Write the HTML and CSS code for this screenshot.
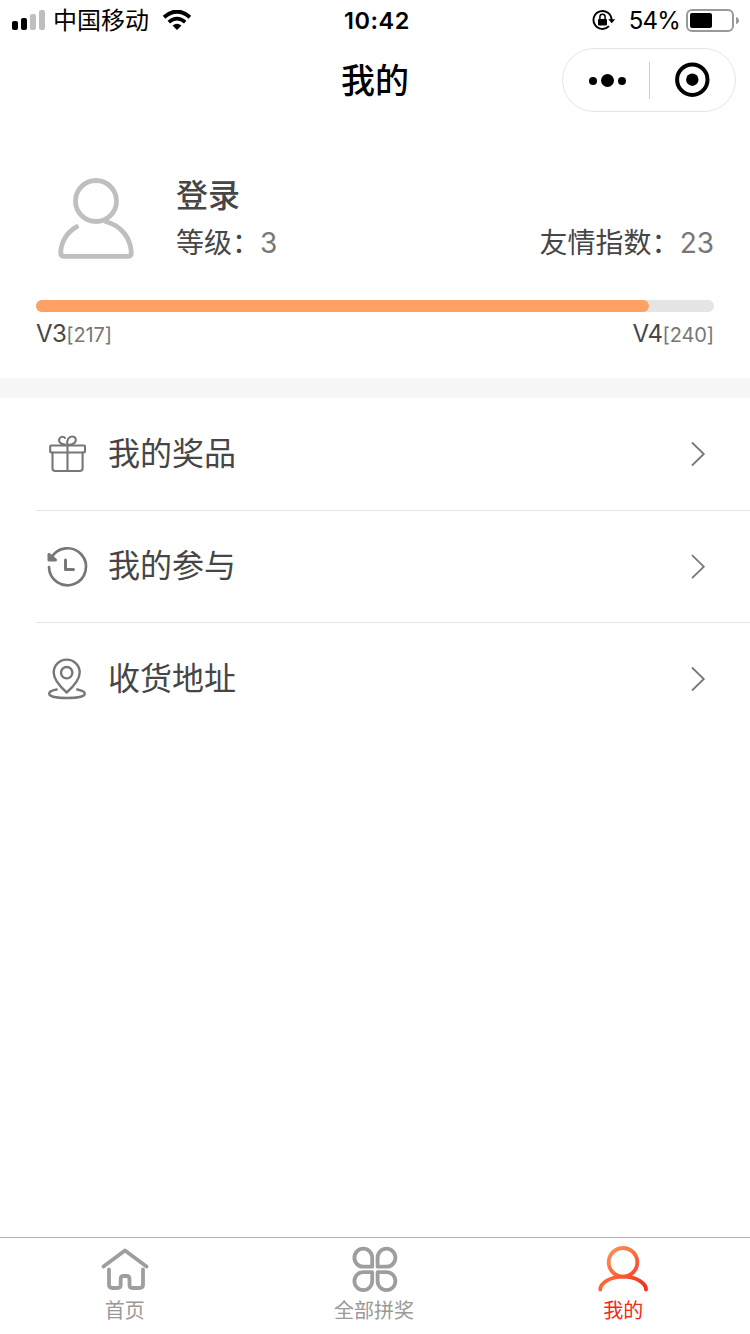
FILE: index.html
```html
<!DOCTYPE html>
<html lang="zh-CN">
<head>
    <meta charset="UTF-8">
    <meta name="viewport" content="width=device-width, initial-scale=1.0">
    <title>我的</title>
    <link rel="stylesheet" href="styles.css">
</head>
<body>
    <div class="page">
        <div class="status-bar">
            <div class="status-left">
                <svg class="signal" width="34" height="20" viewBox="0 0 34 20">
                    <rect x="0" y="11" width="6" height="9" rx="2"/>
                    <rect x="9" y="8" width="6" height="12" rx="2"/>
                    <rect x="18" y="4" width="6" height="16" rx="2" fill="#bfbfbf"/>
                    <rect x="27" y="0" width="6" height="20" rx="2" fill="#bfbfbf"/>
                </svg>
                <span class="carrier">中国移动</span>
                <svg class="wifi" width="28" height="20" viewBox="0 0 28 20">
                    <path d="M1 7.2Q14-4 27 7.2" fill="none" stroke="#000" stroke-width="4"/>
                    <path d="M5.8 12.1Q14 5 22.2 12.1" fill="none" stroke="#000" stroke-width="3.6"/>
                    <path d="M9.500 15.600Q14 11.800 18.500 15.600L14 20z"/>
                </svg>
            </div>
            <div class="status-time">10:42</div>
            <div class="status-right">
                <svg class="lock" width="24" height="22" viewBox="0 0 24 22">
                    <path d="M19.500 11A9 9 0 1 0 17 17.200" fill="none" stroke="#000" stroke-width="1.900"/>
                    <path d="M16.200 10.300h7l-3.500 4z"/>
                    <rect x="6" y="10" width="9" height="6.500" rx="1"/>
                    <path d="M7.900 10.500V7.800a2.600 2.600 0 0 1 5.200 0V10.500" fill="none" stroke="#000" stroke-width="1.500"/>
                </svg>
                <span class="percent">54%</span>
                <svg class="battery" width="54" height="24" viewBox="0 0 54 24">
                    <rect x="1" y="2" width="46" height="21" rx="5" fill="none" stroke="#999" stroke-width="2"/>
                    <rect x="4" y="5" width="22" height="15" rx="2"/>
                    <path d="M50 9q3 1 3 3.500t-3 3.500z" fill="#999"/>
                </svg>
            </div>
        </div>

        <div class="nav-bar">
            <div class="nav-title">我的</div>
            <div class="capsule">
                <svg width="86" height="62" viewBox="0 0 86 62">
                    <circle cx="30" cy="32" r="4"/>
                    <circle cx="44.500" cy="31.500" r="6.500"/>
                    <circle cx="59" cy="32" r="4"/>
                </svg>
                <div class="capsule-line"></div>
                <svg width="85" height="62" viewBox="0 0 85 62">
                    <circle cx="42.300" cy="30.700" r="15.200" fill="none" stroke="#000" stroke-width="4"/>
                    <circle cx="42.300" cy="30.700" r="6.200"/>
                </svg>
            </div>
        </div>

        <div class="profile">
            <div class="user">
                <svg class="avatar" width="96" height="96" viewBox="0 0 96 96">
                    <circle cx="48" cy="31" r="20.500"/>
                    <path d="M28.500 56.800C19 62 13 72 12.700 82.500Q12.700 86.300 16 86.300H80Q83.300 86.300 83.300 82.500C82.500 67.500 73 55.500 57.500 51.500"/>
                </svg>
                <div class="user-info">
                    <div class="user-name">登录</div>
                    <div class="user-data">
                        <div>等级：<span class="num">3</span></div>
                        <div>友情指数：<span class="num">23</span></div>
                    </div>
                </div>
            </div>
            <div class="progress-bar">
                <div class="progress"></div>
            </div>
            <div class="levels">
                <div>V3<span class="score">[217]</span></div>
                <div>V4<span class="score">[240]</span></div>
            </div>
        </div>

        <div class="menu">
            <div class="menu-item">
                <svg class="menu-icon" width="48" height="48" viewBox="0 0 48 48">
                    <g stroke-width="2.100">
                        <rect x="7.200" y="15.500" width="34.800" height="7" rx="1"/>
                        <path d="M9.500 22.500V38.300Q9.500 41 12.300 41H36.800Q39.600 41 39.600 38.300V22.500M24.500 15.500V40"/>
                        <path d="M22 14.600C17.500 14.300 15 11.500 16.500 8.500C17.800 6.300 20.800 6.200 22 8M24.500 15C23.200 10.500 25.700 6.300 29.500 6.500C33 6.700 33.800 10 31.800 12.500C30.200 14.400 27.500 15 24.500 15"/>
                    </g>
                </svg>
                <div class="menu-text">我的奖品</div>
                <svg class="arrow" width="16" height="26" viewBox="0 0 16 26"><path d="M2 1.500L13.800 13L2 24.500"/></svg>
            </div>
            <div class="menu-item">
                <svg class="menu-icon" width="48" height="48" viewBox="0 0 48 48">
                    <g stroke-width="2.700">
                        <path d="M8.200 16A18.500 18.500 0 1 1 6 25"/>
                        <path d="M6 12.500V18H12.500L6 12.500M22.500 18V27.500H30.500" stroke-width="3"/>
                    </g>
                </svg>
                <div class="menu-text">我的参与</div>
                <svg class="arrow" width="16" height="26" viewBox="0 0 16 26"><path d="M2 2.200L13.800 13.700L2 25.200"/></svg>
            </div>
            <div class="menu-item">
                <svg class="menu-icon" width="48" height="48" viewBox="0 0 48 48">
                    <g stroke-width="2.400">
                        <path d="M23.700 37.500C17.500 32 10.700 25 10.700 17.500A13 12.900 0 0 1 36.700 17.500C36.700 25 29.900 32 23.700 37.500Z"/>
                        <circle cx="23.700" cy="17.700" r="5.700"/>
                        <path d="M13.700 34.500C8 35.500 6.200 37 6.200 38.700C6.200 41.600 14.200 43 24 43S41.800 41.600 41.800 38.700C41.800 37 39.700 35.500 34.200 34.500"/>
                    </g>
                </svg>
                <div class="menu-text">收货地址</div>
                <svg class="arrow" width="16" height="26" viewBox="0 0 16 26"><path d="M2 1.500L13.800 13L2 24.500"/></svg>
            </div>
        </div>

        <div class="tab-bar">
            <div class="tab">
                <svg width="54" height="54" viewBox="0 0 54 54">
                    <path d="M5.500 24.500L27 8.500L48.500 24.500"/>
                    <path d="M11 27.500V42.500Q11 46 14.500 46H19.500Q22.700 46 22.700 43V37Q22.700 34 25.500 34H28.500Q31.500 34 31.500 37V43Q31.500 46 34.500 46H41.500Q45 46 45 42.500V27.500"/>
                </svg>
                <div class="tab-text">首页</div>
            </div>
            <div class="tab">
                <svg width="54" height="54" viewBox="0 0 54 54">
                    <path d="M25.200 24.700V15.700A8.900 9 0 1 0 16.300 24.700ZM30.600 24.700V15.700A8.900 9 0 1 1 39.500 24.700ZM25.200 30.100V39.100A8.900 9 0 1 1 16.300 30.100ZM30.600 30.100V39.100A8.900 9 0 1 0 39.500 30.100Z"/>
                </svg>
                <div class="tab-text">全部拼奖</div>
            </div>
            <div class="tab active">
                <svg width="54" height="54" viewBox="0 0 54 54">
                    <defs>
                        <linearGradient id="hot" gradientUnits="userSpaceOnUse" x1="9" y1="5" x2="45" y2="46">
                            <stop offset="0" stop-color="#ff9a5a"/>
                            <stop offset="1" stop-color="#f5301c"/>
                        </linearGradient>
                    </defs>
                    <circle cx="27" cy="20.300" r="14.300"/>
                    <path d="M4.300 47.500C4.300 41 14 34.700 27 34.700S50 41 50 47.500"/>
                </svg>
                <div class="tab-text">我的</div>
            </div>
        </div>
    </div>
</body>
</html>
```
FILE: styles.css
```css
body {
    margin: 0;
    background-color: #fff;
    color: #464646;
    font-family: Inter, "Noto Sans CJK SC", sans-serif;
}
svg {
    display: block;
    flex: none;
}
.page {
    height: 1334px;
    display: flex;
    flex-direction: column;
    overflow: hidden;
}

/* status bar */
.status-bar {
    height: 40px;
    display: grid;
    grid-template-columns: 1fr auto 1fr;
    align-items: center;
    color: #000;
    font-size: 24px;
    line-height: 40px;
}
.status-left {
    display: flex;
    align-items: center;
    padding-left: 12px;
}
.carrier {
    margin: 0 14px 0 7px;
    padding-top: 2px;
    line-height: 38px;
}
.status-time {
    padding: 2px 0 0 4px;
    font-weight: 600;
    font-size: 23.5px;
    letter-spacing: 0.6px;
    line-height: 38px;
}
.status-right {
    display: flex;
    align-items: center;
    justify-content: flex-end;
    padding-right: 10px;
}
.percent {
    margin: 0 6px 0 13px;
    padding-top: 2px;
    font-size: 24px;
    letter-spacing: -0.8px;
    line-height: 38px;
}

/* title and capsule */
.nav-bar {
    height: 88px;
    display: grid;
    grid-template-columns: 1fr auto 1fr;
}
.nav-title {
    grid-column: 2;
    color: #000;
    font-size: 34px;
    font-weight: 500;
    line-height: 82px;
}
.capsule {
    justify-self: end;
    display: flex;
    align-items: center;
    box-sizing: border-box;
    width: 174px;
    height: 64px;
    margin: 8px 14px 0 0;
    border: 1px solid #e5e5e5;
    border-radius: 32px;
}
.capsule-line {
    width: 1px;
    height: 37px;
    background-color: #ccc;
}

/* profile */
.profile {
    box-sizing: border-box;
    height: 270px;
    padding: 42px 36px 0;
    border-bottom: 20px solid #f7f7f7;
}
.user {
    display: flex;
    height: 130px;
}
.avatar {
    margin-left: 12px;
    fill: none;
    stroke: #bfbfbf;
    stroke-width: 4.8;
    stroke-linecap: round;
    stroke-linejoin: round;
}
.user-info {
    flex: 1;
    margin-left: 32px;
}
.user-name {
    font-size: 32px;
    font-weight: 500;
    line-height: 52px;
}
.user-data {
    display: flex;
    justify-content: space-between;
    font-size: 28px;
    line-height: 42px;
}
.num {
    color: #777;
}
.progress-bar {
    height: 12px;
    border-radius: 6px;
    background-color: #e5e5e5;
}
.progress {
    width: 613px;
    height: 12px;
    border-radius: 6px;
    background-color: #ffa064;
}
.levels {
    display: flex;
    justify-content: space-between;
    font-size: 24px;
    letter-spacing: -0.6px;
    line-height: 44px;
}
.score {
    color: #777;
    font-size: 20px;
    letter-spacing: -0.1px;
}

/* menu */
.menu {
    flex: 1;
    padding-left: 36px;
}
.menu-item {
    box-sizing: border-box;
    height: 112.5px;
    display: flex;
    align-items: center;
    padding: 0 44px 0 7px;
    border-bottom: 1px solid #e5e5e5;
}
.menu-item:last-child {
    border-bottom: none;
}
.menu-icon {
    fill: none;
    stroke: #777;
    stroke-linecap: round;
    stroke-linejoin: round;
}
.menu-text {
    flex: 1;
    margin-left: 17px;
    font-size: 32px;
    line-height: 48px;
}
.arrow {
    fill: none;
    stroke: #777;
    stroke-width: 1.8;
}

/* tab bar */
.tab-bar {
    box-sizing: border-box;
    height: 97px;
    display: flex;
    padding-right: 2px;
    border-top: 1px solid #b2b2b2;
}
.tab {
    flex: 1;
    display: flex;
    flex-direction: column;
    align-items: center;
    padding-top: 4px;
    color: #999;
}
.tab svg {
    fill: none;
    stroke: #9e9e9e;
    stroke-width: 3.8;
    stroke-linecap: round;
    stroke-linejoin: round;
}
.tab-text {
    font-size: 20px;
    line-height: 30px;
}
.tab.active {
    color: #f02a14;
}
.tab.active svg {
    stroke: url(#hot);
}
```
